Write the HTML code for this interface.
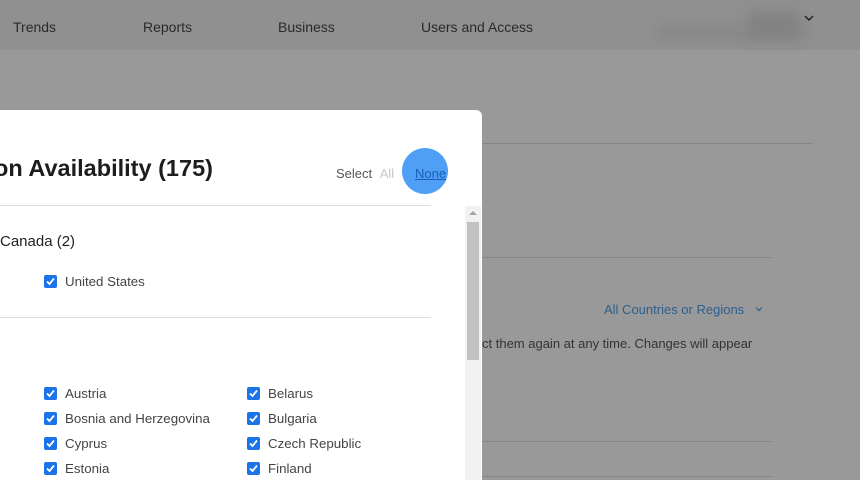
<!DOCTYPE html>
<html style="width:860px;height:480px;overflow:hidden"><head><style>
*{margin:0;padding:0;box-sizing:border-box}
body{width:860px;height:480px;overflow:hidden;background:#999;font-family:"Liberation Sans",sans-serif;position:relative}
.nav{position:absolute;left:0;top:0;width:860px;height:50px;background:#909090}
.nav span{position:absolute;top:19px;font-size:14px;color:#2a2a2a}
.blur{position:absolute;background:#888;filter:blur(6px)}
.ln{position:absolute;height:1px;background:#858585}
.t{position:absolute;font-size:13px;white-space:nowrap}
.modal{position:absolute;left:-10px;top:110px;width:492px;height:370px;background:#fff;border-radius:6px 6px 0 0}
.m{position:absolute;white-space:nowrap}
.cb{position:absolute;width:13px;height:13px;background:#1a73e8;border-radius:2px}
.cb svg{position:absolute;left:1px;top:1px}
.lab{position:absolute;font-size:13.3px;color:#444}
</style></head><body>
<div class="nav">
<span style="left:13px">Trends</span>
<span style="left:143px">Reports</span>
<span style="left:278px">Business</span>
<span style="left:421px">Users and Access</span>
<div class="blur" style="left:655px;top:26px;width:150px;height:14px"></div>
<div class="blur" style="left:748px;top:12px;width:50px;height:26px;background:#828282"></div>
<svg style="position:absolute;left:804px;top:14px" width="10" height="8"><path d="M1 2 L5 6 L9 2" stroke="#222" stroke-width="1.5" fill="none"/></svg>
</div>
<div class="ln" style="left:480px;top:143px;width:333px"></div>
<div class="ln" style="left:480px;top:257px;width:292px"></div>
<div class="t" style="left:604px;top:302px;color:#2d5f8e">All Countries or Regions</div>
<svg style="position:absolute;left:755px;top:306px" width="8" height="6"><path d="M1 1.5 L4 4.5 L7 1.5" stroke="#2d5f8e" stroke-width="1.2" fill="none"/></svg>
<div class="t" style="left:482px;top:336px;color:#333">ct them again at any time. Changes will appear</div>
<div class="ln" style="left:480px;top:441px;width:292px"></div>
<div class="ln" style="left:480px;top:476px;width:292px"></div>

<div class="modal"></div>
<div class="m" style="left:-6px;top:155px;font-size:23.5px;font-weight:bold;color:#1d1d1f">on Availability (175)</div>
<div class="m" style="left:336px;top:166px;font-size:13px;color:#555">Select <span style="color:#c8c8c8;margin-left:4px">All</span></div>
<div style="position:absolute;left:402px;top:148px;width:46px;height:46px;border-radius:50%;background:#4e9ff5"></div>
<div class="m" style="left:415px;top:166px;font-size:13px;color:#1a5fb8;text-decoration:underline">None</div>
<div class="ln" style="left:0;top:205px;width:431px;background:#ddd"></div>
<div class="m" style="left:0;top:233px;font-size:15px;color:#222">Canada (2)</div>
<div class="cb" style="left:44px;top:275px"><svg width="11" height="11"><path d="M2 5.5 L4.5 8 L9 2.5" stroke="#fff" stroke-width="1.8" fill="none"/></svg></div>
<div class="lab" style="left:65px;top:274px">United States</div>
<div class="ln" style="left:0;top:317px;width:431px;background:#ddd"></div>

<div class="cb" style="left:44px;top:387px"><svg width="11" height="11"><path d="M2 5.5 L4.5 8 L9 2.5" stroke="#fff" stroke-width="1.8" fill="none"/></svg></div><div class="lab" style="left:65px;top:386px">Austria</div>
<div class="cb" style="left:247px;top:387px"><svg width="11" height="11"><path d="M2 5.5 L4.5 8 L9 2.5" stroke="#fff" stroke-width="1.8" fill="none"/></svg></div><div class="lab" style="left:268px;top:386px">Belarus</div>
<div class="cb" style="left:44px;top:412px"><svg width="11" height="11"><path d="M2 5.5 L4.5 8 L9 2.5" stroke="#fff" stroke-width="1.8" fill="none"/></svg></div><div class="lab" style="left:65px;top:411px">Bosnia and Herzegovina</div>
<div class="cb" style="left:247px;top:412px"><svg width="11" height="11"><path d="M2 5.5 L4.5 8 L9 2.5" stroke="#fff" stroke-width="1.8" fill="none"/></svg></div><div class="lab" style="left:268px;top:411px">Bulgaria</div>
<div class="cb" style="left:44px;top:437px"><svg width="11" height="11"><path d="M2 5.5 L4.5 8 L9 2.5" stroke="#fff" stroke-width="1.8" fill="none"/></svg></div><div class="lab" style="left:65px;top:436px">Cyprus</div>
<div class="cb" style="left:247px;top:437px"><svg width="11" height="11"><path d="M2 5.5 L4.5 8 L9 2.5" stroke="#fff" stroke-width="1.8" fill="none"/></svg></div><div class="lab" style="left:268px;top:436px">Czech Republic</div>
<div class="cb" style="left:44px;top:462px"><svg width="11" height="11"><path d="M2 5.5 L4.5 8 L9 2.5" stroke="#fff" stroke-width="1.8" fill="none"/></svg></div><div class="lab" style="left:65px;top:461px">Estonia</div>
<div class="cb" style="left:247px;top:462px"><svg width="11" height="11"><path d="M2 5.5 L4.5 8 L9 2.5" stroke="#fff" stroke-width="1.8" fill="none"/></svg></div><div class="lab" style="left:268px;top:461px">Finland</div>

<div style="position:absolute;left:465px;top:206px;width:16px;height:274px;background:#f1f1f1"></div>
<svg style="position:absolute;left:469px;top:210px" width="8" height="6"><path d="M0 5 L4 1 L8 5Z" fill="#a3a3a3"/></svg>
<div style="position:absolute;left:467px;top:222px;width:12px;height:138px;background:#c1c1c1"></div>
</body></html>
